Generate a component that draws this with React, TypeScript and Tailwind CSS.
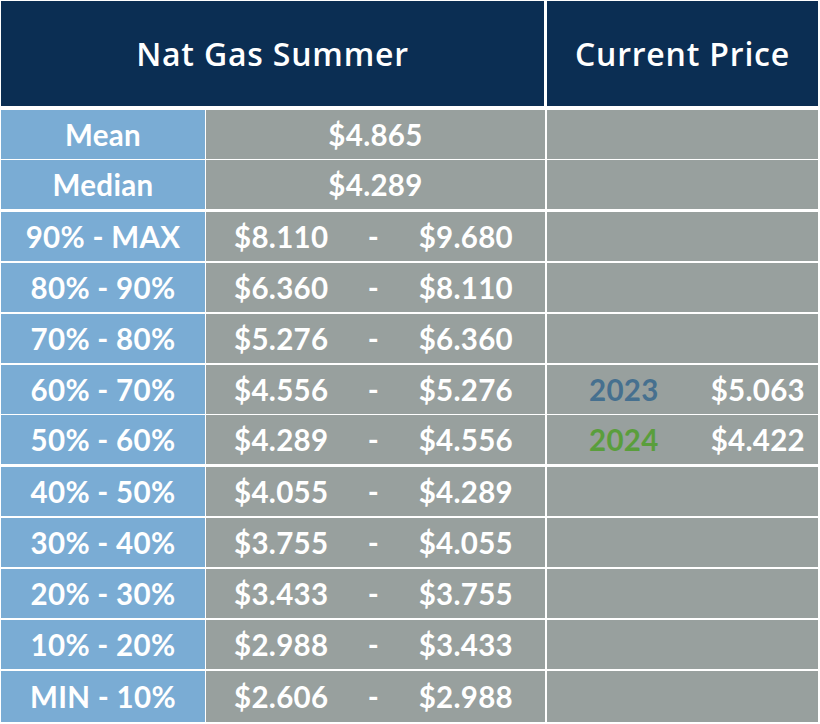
import React from "react";

interface Row {
	label: string;
	lo?: string;
	hi?: string;
	single?: string;
	year?: string;
	yearColor?: string;
	current?: string;
	gap: string;
	height?: string;
}

const rows: Row[] = [
	{ label: "Mean", single: "$4.865", gap: "mt-0" },
	{ label: "Median", single: "$4.289", gap: "mt-[1px]" },
	{ label: "90% - MAX", lo: "$8.110", hi: "$9.680", gap: "mt-[3px]" },
	{ label: "80% - 90%", lo: "$6.360", hi: "$8.110", gap: "mt-[2px]" },
	{ label: "70% - 80%", lo: "$5.276", hi: "$6.360", gap: "mt-[2px]" },
	{
		label: "60% - 70%",
		lo: "$4.556",
		hi: "$5.276",
		year: "2023",
		yearColor: "text-[#46708f]",
		current: "$5.063",
		gap: "mt-[2px]",
	},
	{
		label: "50% - 60%",
		lo: "$4.289",
		hi: "$4.556",
		year: "2024",
		yearColor: "text-[#5a9e3c]",
		current: "$4.422",
		gap: "mt-[1px]",
	},
	{ label: "40% - 50%", lo: "$4.055", hi: "$4.289", gap: "mt-[3px]" },
	{ label: "30% - 40%", lo: "$3.755", hi: "$4.055", gap: "mt-[2px]" },
	{ label: "20% - 30%", lo: "$3.433", hi: "$3.755", gap: "mt-[2px]" },
	{ label: "10% - 20%", lo: "$2.988", hi: "$3.433", gap: "mt-[2px]" },
	{ label: "MIN - 10%", lo: "$2.606", hi: "$2.988", gap: "mt-[2px]", height: "h-[51px]" },
];

const App = () => {
	return (
		<div className="w-[820px] h-[724px] bg-white pt-[1px] pl-[1px] pr-[2px] overflow-hidden font-['Lato','Noto_Sans',sans-serif] text-white">
			{/* header */}
			<div className="flex h-[105px] gap-[3px] font-['Open_Sans','Noto_Sans',sans-serif] text-[32px] tracking-[0.8px] font-semibold">
				<div className="w-[543px] bg-[#0b2e53] flex items-center justify-center">
					Nat Gas Summer
				</div>
				<div className="w-[271px] bg-[#0b2e53] flex items-center justify-center">
					Current Price
				</div>
			</div>

			<div className="mt-[4px] flex flex-col">
				{rows.map((row) => (
					<div
						key={row.label}
						className={`flex ${row.gap} ${row.height ?? "h-[49px]"} text-[29.5px] tracking-[0.3px] font-bold`}
					>
						<div className="w-[204px] bg-[#7aacd4] flex items-center justify-center pt-[1px]">
							{row.label}
						</div>
						<div className="ml-[1px] w-[339px] bg-[#98a09e] flex items-center pt-[1px]">
							{row.single ? (
								<div className="w-full text-center">{row.single}</div>
							) : (
								<div className="w-full flex justify-between pl-[28px] pr-[32px]">
									<span>{row.lo}</span>
									<span>-</span>
									<span>{row.hi}</span>
								</div>
							)}
						</div>
						<div className="ml-[2px] w-[271px] bg-[#98a09e] flex items-center pt-[1px]">
							{row.year && (
								<div className="w-full flex justify-between pl-[42px] pr-[13px]">
									<span className={row.yearColor}>{row.year}</span>
									<span>{row.current}</span>
								</div>
							)}
						</div>
					</div>
				))}
			</div>
		</div>
	);
};

export default App;
